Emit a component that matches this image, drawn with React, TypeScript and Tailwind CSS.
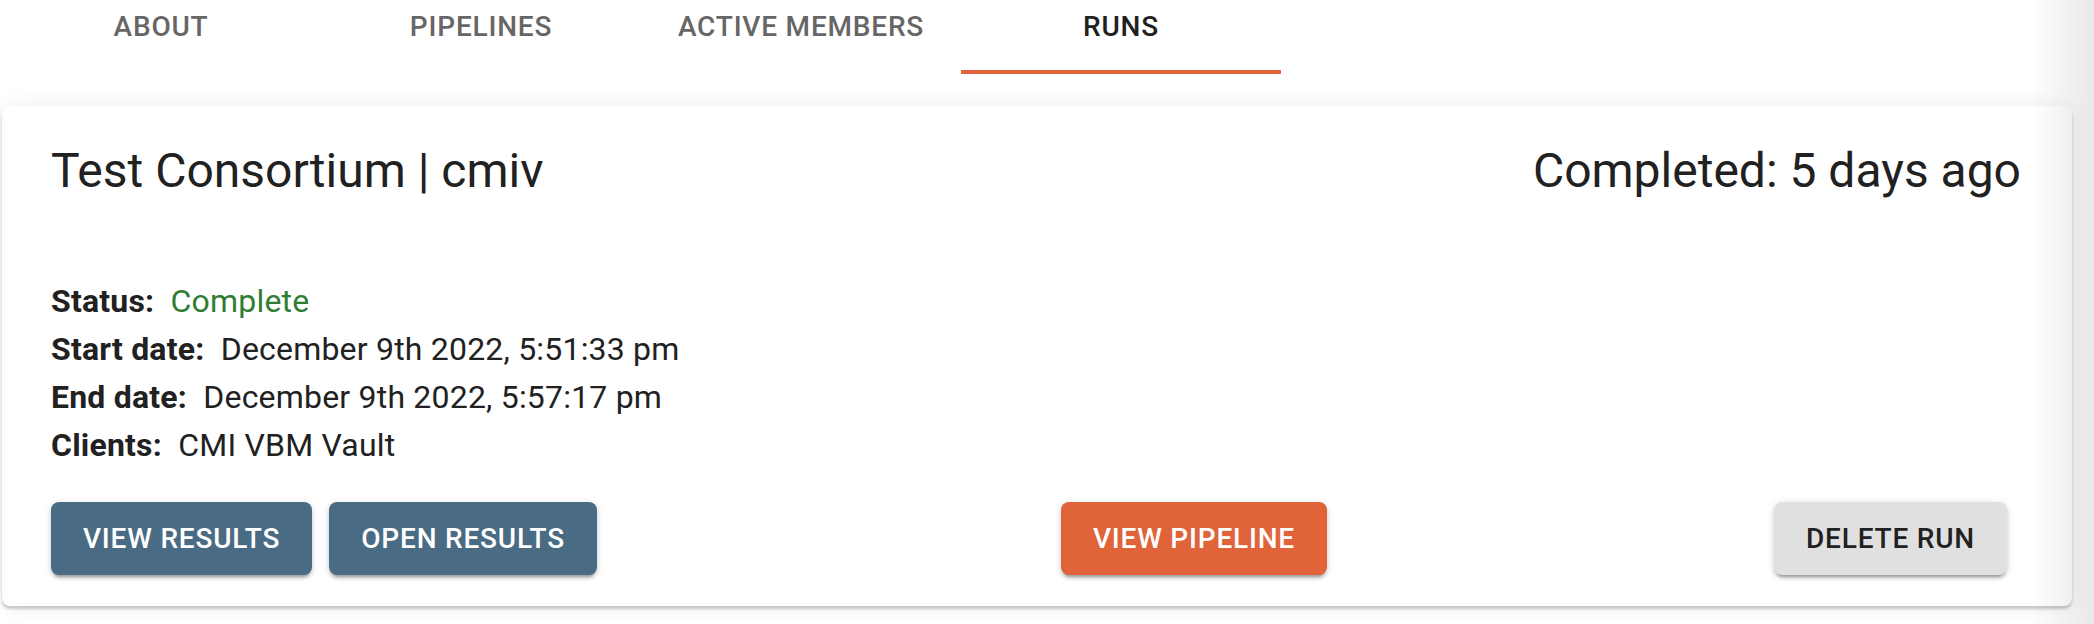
import React from "react";

const tabs = ["ABOUT", "PIPELINES", "ACTIVE MEMBERS", "RUNS"];

function Btn({ children, cls }: { children: React.ReactNode; cls: string }) {
  return (
    <button
      className={
        "h-[73px] px-[32px] rounded-[8px] text-[28px] font-medium tracking-[0.8px] leading-none uppercase shadow-[0_5px_3px_-3px_rgba(0,0,0,0.25),0_3px_4px_rgba(0,0,0,0.14),0_1px_9px_rgba(0,0,0,0.1)] " +
        cls
      }
    >
      {children}
    </button>
  );
}

function Row({ label, value, valueCls = "text-[#212121]" }: { label: string; value: string; valueCls?: string }) {
  return (
    <div className="h-[48px] leading-[48px] text-[32px] tracking-[0.2px] whitespace-pre">
      <span className="font-bold text-[#212121]">{label}</span>
      <span className={valueCls}>{"  " + value}</span>
    </div>
  );
}

export default function App() {
  return (
    <div
      className="relative w-[2094px] h-[624px] overflow-hidden bg-white"
      style={{ fontFamily: "Roboto, 'Liberation Sans', sans-serif" }}
    >
      <div className="flex ml-[1px] h-[74px]">
        {tabs.map((t, i) => (
          <div key={t} className="w-[320px] h-[74px] flex flex-col items-center">
            <div
              className={
                "pt-[11px] h-[70px] leading-[32px] text-[28px] font-medium tracking-[0.8px] " +
                (i === 3 ? "text-[#212121]" : "text-[#666666]")
              }
            >
              {t}
            </div>
            {i === 3 && <div className="w-full h-[4px] bg-[#e0633a]" />}
          </div>
        ))}
      </div>

      <div className="mt-[32px] ml-[2px] w-[2070px] h-[500px] rounded-[8px] bg-white shadow-[0_3px_3px_rgba(0,0,0,0.2),0_0_22px_rgba(0,0,0,0.07)] pl-[49px] pr-[51px] pt-[33px]">
        <div className="flex justify-between items-start h-[64px] leading-[64px] text-[48px] text-[#212121]">
          <div>Test Consortium | cmiv</div>
          <div>Completed: 5 days ago</div>
        </div>
        <div className="mt-[74px]">
          <Row label="Status:" value="Complete" valueCls="text-[#2e7d32]" />
          <Row label="Start date:" value="December 9th 2022, 5:51:33 pm" />
          <Row label="End date:" value="December 9th 2022, 5:57:17 pm" />
          <Row label="Clients:" value="CMI VBM Vault" />
        </div>
        <div className="mt-[33px] flex items-start pr-[14px]">
          <Btn cls="bg-[#4a6b84] text-white">View Results</Btn>
          <Btn cls="ml-[17px] bg-[#4a6b84] text-white">Open Results</Btn>
          <Btn cls="ml-[464px] bg-[#e0633a] text-white">View Pipeline</Btn>
          <Btn cls="ml-auto bg-[#e0e0e0] text-[#212121]">Delete Run</Btn>
        </div>
      </div>

      <div className="pointer-events-none absolute right-0 top-0 h-full w-[64px] bg-gradient-to-r from-transparent to-black/[0.09]" />
    </div>
  );
}
